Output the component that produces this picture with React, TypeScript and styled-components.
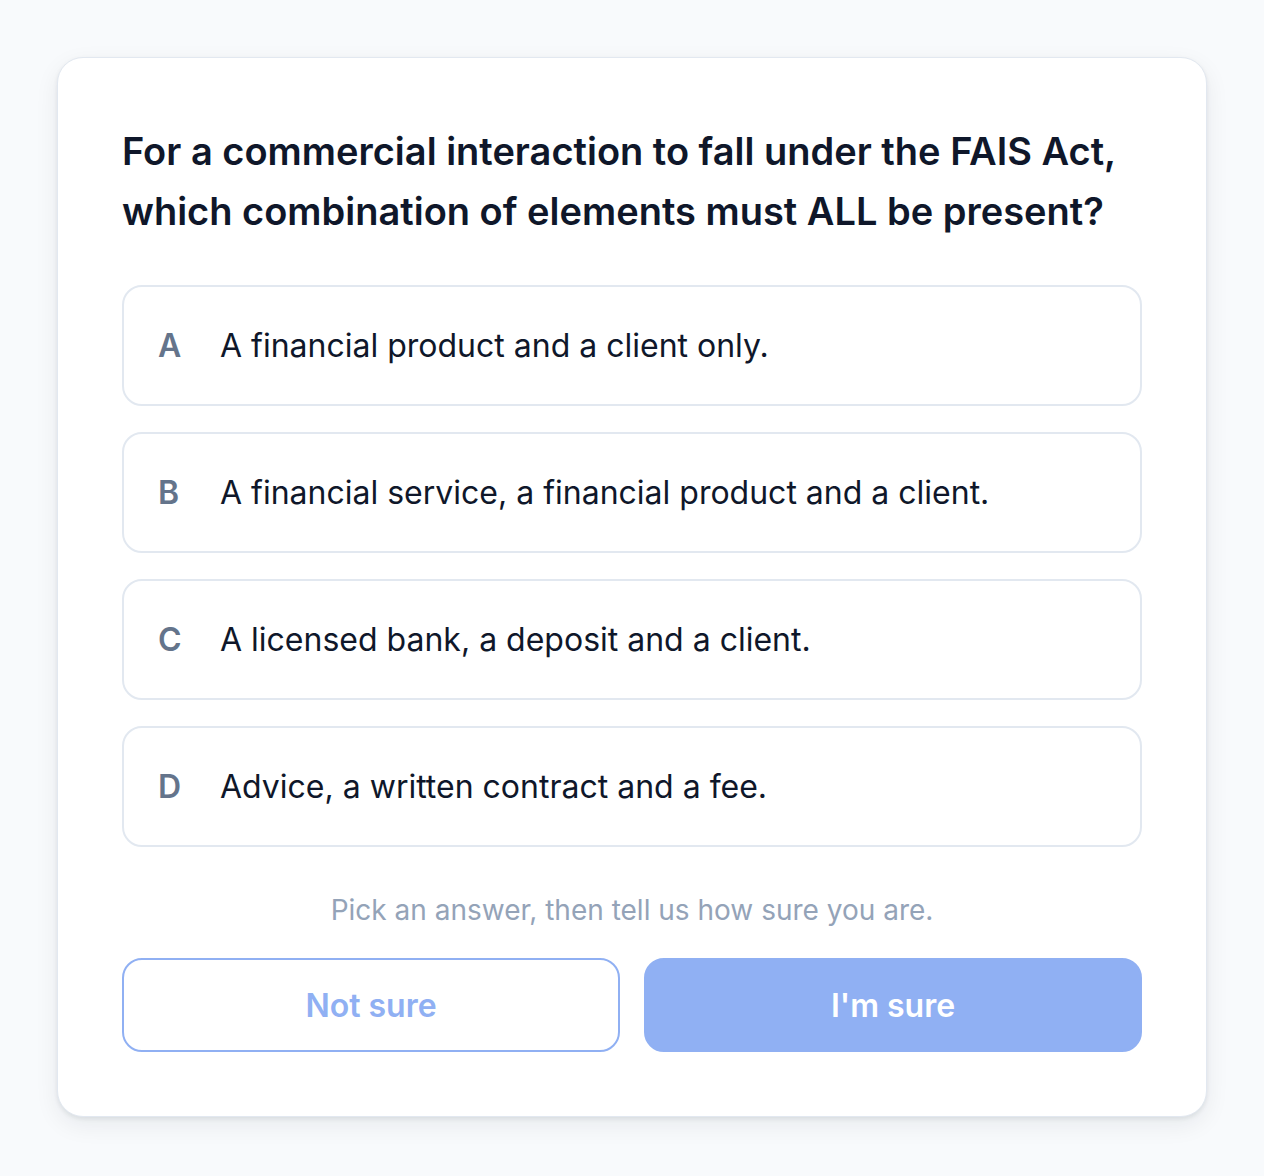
import React from 'react';
import styled, { createGlobalStyle } from 'styled-components';

const GlobalStyle = createGlobalStyle`
  * {
    box-sizing: border-box;
  }
  body {
    margin: 0;
    background: #f8fafc;
    font-family: Inter, 'Noto Sans', sans-serif;
    font-optical-sizing: none;
    color: #0f172a;
  }
`;

const options = [
  { letter: 'A', text: 'A financial product and a client only.' },
  { letter: 'B', text: 'A financial service, a financial product and a client.' },
  { letter: 'C', text: 'A licensed bank, a deposit and a client.' },
  { letter: 'D', text: 'Advice, a written contract and a fee.' },
];

const App: React.FC = () => {
  return (
    <Page>
      <GlobalStyle />
      <Card>
        <Question>
          For a commercial interaction to fall under the FAIS Act, which
          combination of elements must ALL be present?
        </Question>
        <OptionList>
          {options.map((item) => (
            <Option key={item.letter} type='button'>
              <Letter>{item.letter}</Letter>
              <OptionText>{item.text}</OptionText>
            </Option>
          ))}
        </OptionList>
        <Hint>Pick an answer, then tell us how sure you are.</Hint>
        <ButtonRow>
          <Button type='button' variant='outline' disabled>
            Not sure
          </Button>
          <Button type='button' variant='solid' disabled>
            I'm sure
          </Button>
        </ButtonRow>
      </Card>
    </Page>
  );
};

const Page = styled.div`
  min-height: 1176px;
  padding: 57px 57px;
`;

const Card = styled.div`
  width: 1150px;
  background: #ffffff;
  border: 1px solid #e2e8f0;
  border-radius: 26px;
  padding: 63px 64px 64px;
  box-shadow: 0 2px 4px rgba(15, 23, 42, 0.08), 0 8px 24px rgba(15, 23, 42, 0.07);
`;

const Question = styled.h2`
  margin: 0 0 44px;
  font-size: 38px;
  line-height: 60px;
  font-weight: 600;
  color: #0f172a;
`;

const OptionList = styled.div`
  display: flex;
  flex-direction: column;
  gap: 26px;
`;

const Option = styled.button`
  display: flex;
  align-items: center;
  gap: 30px;
  width: 100%;
  height: 121px;
  padding: 0 34px;
  background: #ffffff;
  border: 2px solid #e2e8f0;
  border-radius: 20px;
  font-family: inherit;
  text-align: left;
  cursor: pointer;
`;

const Letter = styled.span`
  width: 32px;
  font-size: 32px;
  font-weight: 600;
  color: #64748b;
`;

const OptionText = styled.span`
  font-size: 32px;
  font-weight: 400;
  color: #0f172a;
`;

const Hint = styled.p`
  margin: 45px 0 30px;
  text-align: center;
  font-size: 28px;
  line-height: 36px;
  color: #94a3b8;
`;

const ButtonRow = styled.div`
  display: grid;
  grid-template-columns: 1fr 1fr;
  gap: 24px;
`;

const Button = styled.button<{ variant: 'outline' | 'solid' }>`
  height: 94px;
  border-radius: 20px;
  font-family: inherit;
  font-size: 32px;
  font-weight: 600;
  border: 2px solid #90b0f3;
  background: ${(p) => (p.variant === 'solid' ? '#90b0f3' : '#ffffff')};
  color: ${(p) => (p.variant === 'solid' ? '#ffffff' : '#90b0f3')};
  cursor: not-allowed;
`;

export default App;
